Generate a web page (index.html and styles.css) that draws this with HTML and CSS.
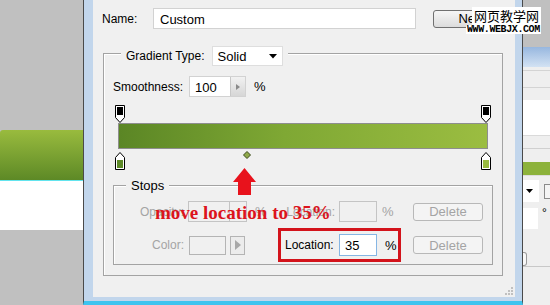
FILE: index.html
```html
<!DOCTYPE html>
<html lang="en">
<head>
  <meta charset="UTF-8" />
  <title>Gradient Editor</title>
  <link rel="stylesheet" href="styles.css">
</head>
<body>
  <div class="screen">
    <!-- Left canvas behind the dialog -->
    <div class="left-pane">
      <div class="left-bar"></div>
      <div class="left-white"></div>
    </div>

    <!-- Dialog window -->
    <div class="window">
      <div class="dialog">
        <div class="row name-row">
          <span class="name-label">Name:</span>
          <div class="field name-field">Custom</div>
          <div class="btn new-btn">New</div>
        </div>

        <div class="group type-group">
          <div class="legend type-legend">
            <span>Gradient Type:</span>
            <div class="select">
              <span>Solid</span>
              <svg width="8" height="5" viewBox="0 0 8 5"><path d="M0 0H8L4 4.5Z" fill="#000"/></svg>
            </div>
          </div>

          <div class="row smooth-row">
            <span class="smooth-label">Smoothness:</span>
            <div class="field spin-field">
              <span class="spin-value">100</span>
              <div class="spin-btn">
                <svg width="4" height="6" viewBox="0 0 4 6"><path d="M0 0L4 3L0 6Z" fill="#8a8a8a"/></svg>
              </div>
            </div>
            <span class="unit">%</span>
          </div>

          <div class="ramp">
            <div class="stops-row stops-top">
              <svg class="stop" width="10" height="18" viewBox="0 0 10 18">
                <path d="M0.5 0.5H9.5V12.5L5 17.5L0.5 12.5Z" fill="#fff" stroke="#000"/>
                <rect x="2" y="2" width="6" height="8" fill="#000"/>
              </svg>
              <svg class="stop" width="10" height="18" viewBox="0 0 10 18">
                <path d="M0.5 0.5H9.5V12.5L5 17.5L0.5 12.5Z" fill="#fff" stroke="#000"/>
                <rect x="2" y="2" width="6" height="8" fill="#000"/>
              </svg>
            </div>
            <div class="bar"></div>
            <div class="stops-row stops-bottom">
              <svg class="stop" width="10" height="18" viewBox="0 0 10 18">
                <path d="M5 0.5L9.5 5.5V17.5H0.5V5.5Z" fill="#fff" stroke="#000"/>
                <rect x="2" y="8" width="6" height="8" fill="#5e8a27"/>
              </svg>
              <svg class="midpoint" width="8" height="8" viewBox="0 0 8 8"><path d="M4 0.5L7.5 4L4 7.5L0.5 4Z" fill="#8fa94a" stroke="#3c4a1c"/></svg>
              <svg class="stop" width="10" height="18" viewBox="0 0 10 18">
                <path d="M5 0.5L9.5 5.5V17.5H0.5V5.5Z" fill="#fff" stroke="#000"/>
                <rect x="2" y="8" width="6" height="8" fill="#99bb40"/>
              </svg>
            </div>
          </div>

          <div class="group stops-group">
            <div class="legend stops-legend">Stops</div>

            <div class="row stop-row">
              <span class="stop-label off">Opacity:</span>
              <div class="field off-field opacity-field"><span class="opacity-value"></span></div>
              <span class="unit off unit-gap">%</span>
              <span class="stop-label off">Location:</span>
              <div class="field off-field loc-field"></div>
              <span class="unit off unit-near">%</span>
              <div class="btn del-btn">Delete</div>
            </div>

            <div class="row stop-row color-row">
              <span class="stop-label off">Color:</span>
              <div class="swatch"></div>
              <div class="swatch-btn">
                <svg width="6" height="10" viewBox="0 0 6 10"><path d="M0 0L6 5L0 10Z" fill="#a8a8a8"/></svg>
              </div>
              <div class="callout">
                <span class="loc-label">Location:</span>
                <div class="field loc-active">35</div>
                <span class="unit unit-far">%</span>
              </div>
              <div class="btn del-btn del-gap">Delete</div>
            </div>
          </div>
        </div>
      </div>
    </div>

    <!-- Right panel behind the dialog -->
    <div class="right-pane">
      <div class="rp-gray"></div>
      <div class="rp-head"></div>
      <div class="rp-rows"></div>
      <div class="rp-white"></div>
      <div class="rp-rows2"></div>
      <div class="rp-green"></div>
      <div class="rp-combo">
        <div class="rp-drop"><svg width="7" height="4" viewBox="0 0 7 4"><path d="M0 0H7L3.5 4Z" fill="#000"/></svg></div>
        <div class="rp-check"></div>
      </div>
      <div class="rp-angle">
        <div class="rp-input"></div>
        <span class="rp-deg">°</span>
      </div>
      <div class="rp-slider"><div class="rp-thumb"></div></div>
    </div>

    <!-- Annotations laid over the screenshot -->
    <svg class="red-arrow" width="26" height="30" viewBox="0 0 26 30">
      <path d="M1 15L12.5 1L24 15H19V28H6V15Z" fill="#e8121c"/>
    </svg>
    <div class="red-note">move location to 35%</div>
    <div class="watermark">
      <span class="wm-cn">网页教学网</span>
      <span class="wm-en">WWW.WEBJX.COM</span>
    </div>
    <svg class="grip" width="8" height="8" viewBox="0 0 8 8">
      <rect x="6" y="0" width="2" height="2" fill="#c0c0c0"/>
      <rect x="3" y="3" width="2" height="2" fill="#c0c0c0"/>
      <rect x="6" y="3" width="2" height="2" fill="#c0c0c0"/>
      <rect x="0" y="6" width="2" height="2" fill="#c0c0c0"/>
      <rect x="3" y="6" width="2" height="2" fill="#c0c0c0"/>
      <rect x="6" y="6" width="2" height="2" fill="#c0c0c0"/>
    </svg>
  </div>
</body>
</html>
```
FILE: styles.css
```css
:root {
  --dialog-bg: #f0f0f0;
  --frame-bg: #c2d6ec;
  --frame-edge: #4a4a4a;
  --group-line: #a3a3a3;
  --field-line: #d2d2d2;
  --off-text: #a4a4a4;
  --off-line: #c4c4c4;
  --note-red: #dc141c;
}

body {
  margin: 0;
  font-family: "Liberation Sans", Arial, sans-serif;
  font-size: 12px;
  color: #000;
  background-color: #c0c0c0;
}

.screen {
  position: relative;
  display: flex;
  width: 550px;
  height: 305px;
  overflow: hidden;
}

/* Left canvas */
.left-pane {
  width: 83px;
  padding-top: 130px;
  flex-shrink: 0;
}

.left-bar {
  height: 50px;
  background: linear-gradient(#99bb3e, #5d8926);
  border-top-left-radius: 3px;
}

.left-white {
  height: 49px;
  background-color: #fff;
  border-top: 1px solid #62e4ee;
}

/* Window frame */
.window {
  width: 440px;
  box-sizing: border-box;
  flex-shrink: 0;
  padding: 0 7px 4px 9px;
  background-color: var(--frame-bg);
  border-left: 1px solid var(--frame-edge);
  border-right: 1px solid var(--frame-edge);
  border-bottom: 4px solid #3ec4ef;
}

.dialog {
  height: 297px;
  box-sizing: border-box;
  padding: 8px 0 0 9px;
  background-color: var(--dialog-bg);
}

.row {
  display: flex;
  align-items: center;
}

.field {
  box-sizing: border-box;
  background-color: #fff;
  border: 1px solid var(--field-line);
}

.btn {
  box-sizing: border-box;
  display: flex;
  align-items: center;
  justify-content: center;
  border-radius: 3px;
}

/* Name row */
.name-row {
  height: 21px;
}

.name-label {
  width: 51px;
}

.name-field {
  width: 263px;
  height: 21px;
  padding: 3px 0 0 6px;
  font-size: 13px;
}

.new-btn {
  width: 77px;
  height: 18px;
  margin-left: 17px;
  border: 1px solid #707070;
  background: linear-gradient(#f6f6f6, #dcdcdc);
  font-size: 13px;
}

/* Etched group boxes */
.group {
  box-sizing: border-box;
  border: 1px solid var(--group-line);
  box-shadow: inset 1px 1px #fff;
}

.legend {
  width: fit-content;
  padding: 0 5px;
  background-color: var(--dialog-bg);
}

.type-group {
  width: 400px;
  margin: 24px 0 0 1px;
  padding: 0 9px 10px 9px;
}

.type-legend {
  display: flex;
  align-items: center;
  height: 20px;
  margin: -8px 0 0 8px;
}

.select {
  box-sizing: border-box;
  display: flex;
  align-items: center;
  justify-content: space-between;
  width: 71px;
  height: 20px;
  margin-left: 7px;
  padding: 0 5px 0 5px;
  background-color: #fff;
  border: 1px solid #dedede;
  font-size: 13px;
}

/* Smoothness */
.smooth-row {
  height: 21px;
  margin-top: 10px;
}

.smooth-label {
  width: 76px;
}

.spin-field {
  display: flex;
  width: 57px;
  height: 21px;
}

.spin-value {
  width: 40px;
  padding: 3px 0 0 5px;
  box-sizing: border-box;
  font-size: 13px;
}

.spin-btn {
  flex: 1;
  display: flex;
  align-items: center;
  justify-content: center;
  border-left: 1px solid #c8c8c8;
  background: linear-gradient(#f2f2f2, #d6d6d6);
}

.unit {
  width: 10px;
  margin-left: 8px;
  font-size: 13px;
}

/* Gradient ramp */
.ramp {
  margin-top: 8px;
}

.stops-row {
  position: relative;
  display: flex;
  justify-content: space-between;
  width: 376px;
  margin-left: 2px;
}

.stop {
  display: block;
}

.stops-top {
  height: 18px;
}

.bar {
  box-sizing: border-box;
  width: 370px;
  height: 26px;
  margin-left: 5px;
  border: 1px solid #8e8e8e;
  background: linear-gradient(to right, #5b8625, #7fa834 45%, #9bbd41);
}

.stops-bottom {
  height: 20px;
  padding-top: 3px;
  box-sizing: border-box;
  align-items: flex-start;
}

.midpoint {
  position: absolute;
  left: 128px;
  top: 2px;
}

/* Stops group */
.stops-group {
  width: 380px;
  margin-top: 16px;
  padding-bottom: 8px;
}

.stops-legend {
  height: 14px;
  line-height: 14px;
  margin: -7px 0 0 12px;
  font-size: 13px;
}

.stop-row {
  height: 21px;
  margin-top: 8px;
}

.color-row {
  height: 22px;
  margin-top: 12px;
}

.stop-label {
  width: 70px;
  text-align: right;
}

.off {
  color: var(--off-text);
}

.off-field {
  height: 21px;
  background-color: var(--dialog-bg);
  border-color: var(--off-line);
}

.opacity-field {
  width: 59px;
  margin-left: 4px;
}

.opacity-value {
  display: block;
  width: 40px;
  height: 100%;
  border-right: 1px solid var(--off-line);
}

.loc-field {
  width: 38px;
  margin-left: 4px;
}

.unit-near {
  margin-left: 5px;
}

.del-btn {
  width: 70px;
  height: 18px;
  margin-left: 21px;
  border: 1px solid #b8b8b8;
  background-color: #f4f4f4;
  color: var(--off-text);
  font-size: 13px;
}

.del-gap {
  margin-left: 12px;
}

.swatch {
  box-sizing: border-box;
  width: 37px;
  height: 19px;
  margin-left: 5px;
  border: 1px solid #b4b4b4;
}

.swatch-btn {
  box-sizing: border-box;
  display: flex;
  align-items: center;
  justify-content: center;
  width: 15px;
  height: 19px;
  margin-left: 4px;
  border: 1px solid #b4b4b4;
  background-color: #ececec;
}

.callout {
  box-sizing: border-box;
  display: flex;
  align-items: center;
  width: 123px;
  height: 34px;
  margin: -6px 0 -6px 33px;
  padding-left: 4px;
  border: 3px solid #d3131b;
}

.loc-label {
  width: 50px;
  font-size: 12px;
}

.loc-active {
  width: 38px;
  height: 22px;
  margin-left: 4px;
  padding: 3px 0 0 5px;
  border-color: #86b6e4;
  font-size: 13px;
}

.unit-far {
  margin-left: 8px;
}

/* Right panel */
.right-pane {
  flex: 1;
  display: flex;
  flex-direction: column;
  background-color: #efefef;
}

.rp-gray {
  height: 47px;
  background-color: #c0c0c0;
}

.rp-head {
  height: 20px;
  background: linear-gradient(#97b7df, #d3e2f3);
}

.rp-rows {
  height: 16px;
  margin-top: 3px;
  border-top: 1px solid #d4d4d4;
  border-bottom: 1px solid #d4d4d4;
}

.rp-white {
  height: 35px;
  margin-top: 12px;
  background-color: #fff;
  border-bottom: 1px solid #dadada;
}

.rp-rows2 {
  height: 12px;
  border-bottom: 1px solid #d0d0d0;
  margin-bottom: 13px;
}

.rp-green {
  height: 13px;
  background-color: #8cb23b;
  border-bottom: 1px solid #dcdcdc;
}

.rp-combo {
  display: flex;
  align-items: center;
  height: 26px;
  margin-top: 2px;
}

.rp-drop {
  display: flex;
  align-items: center;
  width: 13px;
  height: 22px;
  padding-left: 3px;
  background-color: #fff;
}

.rp-check {
  width: 6px;
  height: 13px;
  margin-left: 5px;
  border: 1px solid #8a8a8a;
  border-right: none;
  background-color: #f4f4f4;
}

.rp-angle {
  display: flex;
  align-items: flex-start;
  height: 21px;
  margin-top: 4px;
}

.rp-input {
  width: 15px;
  height: 21px;
  background-color: #fff;
}

.rp-deg {
  margin-left: 4px;
  font-size: 12px;
  line-height: 10px;
}

.rp-slider {
  height: 16px;
  margin-top: 21px;
  border-bottom: 1px solid #c8c8c8;
}

.rp-thumb {
  width: 3px;
  height: 12px;
  margin-top: 2px;
  border: 1px solid #9a9a9a;
  border-left: none;
  border-radius: 0 3px 3px 0;
  background-color: #f8f8f8;
}

/* Overlaid annotations */
.red-arrow {
  position: absolute;
  left: 232px;
  top: 167px;
}

.red-note {
  position: absolute;
  left: 155px;
  top: 202px;
  font-family: "Liberation Serif", "Times New Roman", serif;
  font-size: 19px;
  font-weight: bold;
  color: var(--note-red);
  white-space: nowrap;
}

.watermark {
  position: absolute;
  left: 466px;
  top: 7px;
  display: flex;
  flex-direction: column;
  align-items: flex-start;
}

.wm-cn {
  margin-left: 6px;
  padding: 0 2px;
  background-color: #fff;
  font-family: "Noto Sans CJK SC", sans-serif;
  font-size: 13px;
  line-height: 18px;
}

.wm-en {
  padding: 0 1px;
  background-color: #fff;
  font-family: "Liberation Mono", monospace;
  font-weight: bold;
  font-size: 10px;
  line-height: 9px;
  letter-spacing: -0.4px;
}

.grip {
  position: absolute;
  left: 505px;
  top: 287px;
}
```
